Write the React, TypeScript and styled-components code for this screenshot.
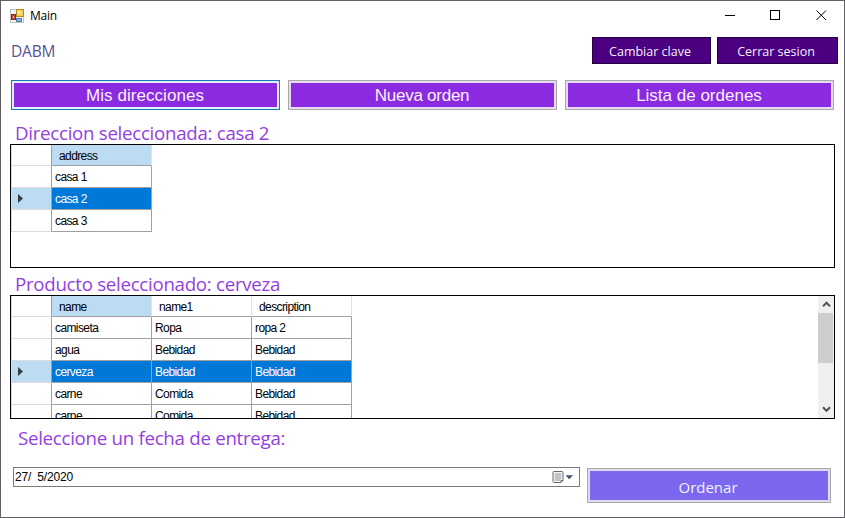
import React from 'react';
import styled, { createGlobalStyle, css } from 'styled-components';

const Global = createGlobalStyle`
  * { box-sizing: border-box; }
  html, body { margin: 0; padding: 0; background: #fff; }
`;

const segoe = `"Open Sans", "Noto Sans", sans-serif`;
const arial = `"Liberation Sans", Arial, sans-serif`;

const Window = styled.div`
  width: 845px;
  height: 518px;
  border: 1px solid #625f66;
  background: #fff;
  overflow: hidden;
  display: flex;
  flex-direction: column;
  font-family: ${segoe};
`;

const TitleBar = styled.header`
  height: 29px;
  flex: none;
  display: flex;
  align-items: center;
  padding-left: 9px;
`;

const Title = styled.span`
  margin-left: 6px;
  flex: 1;
  font-size: 12px;
  line-height: 16px;
  letter-spacing: -0.25px;
  color: #000;
`;

const Caption = styled.div`
  width: 46px;
  display: flex;
  justify-content: center;
`;

const TopRow = styled.div`
  height: 28px;
  flex: none;
  margin: 7px 6px 0 10px;
  display: flex;
  gap: 6px;
`;

const UserName = styled.span`
  flex: 1;
  font-size: 15.5px;
  line-height: 29px;
  letter-spacing: -0.2px;
  color: #5a509a;
`;

const AccountButton = styled.button<{ $w: number }>`
  width: ${p => p.$w}px;
  height: 27px;
  padding: 2px 3px 0 0;
  border: 1px solid #24003f;
  background: #4b0082;
  color: #f6eefb;
  font: 12.5px/23px ${segoe};
`;

const Tabs = styled.nav`
  flex: none;
  height: 30px;
  margin: 15px 10px 0 10px;
  display: grid;
  grid-template-columns: repeat(3, 269px);
  gap: 8px;
`;

const framed = css<{ $focused?: boolean }>`
  border: 1px solid ${p => (p.$focused ? '#1779b8' : '#a9a9a9')};
  margin: 0;
`;

const TabButton = styled.button<{ $focused?: boolean; $ls?: number }>`
  ${framed}
  padding: 2px 1px 0 0;
  background: #8a2be2;
  box-shadow: inset 0 0 0 2px ${p => (p.$focused ? '#e4eefa' : '#ead9f5')};
  color: #fbf0fb;
  font: 17px/24px ${arial};
  letter-spacing: ${p => p.$ls ?? 0}px;
`;

const Heading = styled.h2<{ $left?: number; $top: number; $h: number }>`
  flex: none;
  margin: ${p => p.$top}px 0 0 ${p => p.$left ?? 14}px;
  height: ${p => p.$h}px;
  font-size: 18.7px;
  line-height: 24px;
  font-weight: 400;
  letter-spacing: -0.28px;
  white-space: pre;
  color: #9340e0;
`;

const GridBox = styled.div`
  flex: none;
  width: 825px;
  height: 124px;
  margin-left: 9px;
  border: 1px solid #000;
  display: flex;
  justify-content: space-between;
  overflow: hidden;
`;

const Table = styled.div<{ $cols: number }>`
  display: grid;
  grid-template-columns: 41px repeat(${p => p.$cols}, 100px);
  grid-template-rows: 21px;
  grid-auto-rows: 22px;
  align-content: start;
  font: 12px/20px ${arial};
  letter-spacing: -0.6px;
  color: #000;
`;

const RowHead = styled.div<{ $on?: boolean }>`
  border-right: 1px solid #a0a0a0;
  border-bottom: 1px solid #dcdcdc;
  border-left: 1px solid #dcdcdc;
  background: ${p => (p.$on ? '#bcdcf4' : '#fff')};
  display: flex;
  align-items: center;
  padding-left: 6px;
`;

const ColHead = styled.div<{ $on?: boolean }>`
  border-right: 1px solid #e2e2e2;
  border-bottom: 1px solid #a0a0a0;
  background: ${p => (p.$on ? '#bcdcf4' : '#fff')};
  padding: 1px 0 0 7px;
`;

const Cell = styled.div<{ $on?: boolean }>`
  border-right: 1px solid #a0a0a0;
  border-bottom: 1px solid #a0a0a0;
  background: ${p => (p.$on ? '#0078d7' : '#fff')};
  color: ${p => (p.$on ? '#fff' : '#000')};
  padding: 1px 0 0 3px;
`;

const ScrollBar = styled.div`
  width: 16px;
  display: flex;
  flex-direction: column;
  background: #f0f0f0;
`;

const Arrow = styled.div`
  height: 17px;
  display: flex;
  align-items: center;
  justify-content: center;
`;

const Thumb = styled.div`
  height: 50px;
  margin-right: 1px;
  background: #cdcdcd;
`;

const Spacer = styled.div`
  flex: 1;
`;

const OrderRow = styled.div`
  display: flex;
  align-items: flex-start;
  margin: 17px 0 0 12px;
`;

const DateField = styled.div`
  width: 567px;
  height: 20px;
  border: 1px solid #7a7a7a;
  padding: 0 5px 0 1px;
  display: flex;
  align-items: center;
  justify-content: space-between;
  font: 12px/18px ${arial};
  letter-spacing: -0.2px;
  white-space: pre;
  color: #000;
`;

const OrderButton = styled.button`
  ${framed}
  width: 244px;
  height: 35px;
  margin: 1px 0 0 7px;
  padding: 2px 2px 0 0;
  background: #7b68ee;
  box-shadow: inset 0 0 0 2px #dedcf2;
  color: #f4f2ff;
  font: 400 15px/28px ${segoe};
`;

const AppIcon = () => (
  <svg width="14" height="14" viewBox="0 0 14 14" shapeRendering="crispEdges">
    <rect x=".5" y=".5" width="13" height="13" fill="#f4f6f6" stroke="#b9c6c8" />
    <rect x="6.5" y=".5" width="7" height="7" fill="#f6cf4e" stroke="#b88a1c" />
    <rect x="8" y="2" width="3" height="3" fill="#fde896" />
    <rect x="1.5" y="5.5" width="4" height="5" fill="#c8483c" stroke="#7e2a26" />
    <rect x="3" y="7" width="1" height="2" fill="#f0b0a0" />
    <rect x="6.5" y="9.5" width="5" height="3" fill="#7fb2e8" stroke="#4c7fba" />
  </svg>
);

const Minimize = () => (
  <svg width="11" height="11"><path d="M1 5.5h10" stroke="#000" shapeRendering="crispEdges" /></svg>
);
const Maximize = () => (
  <svg width="11" height="11"><rect x=".5" y=".5" width="9" height="9" fill="none" stroke="#000" shapeRendering="crispEdges" /></svg>
);
const Close = () => (
  <svg width="11" height="11"><path d="M.5.5l9.5 9.5M10 .5L.5 10" stroke="#000" /></svg>
);
const Marker = () => (
  <svg width="6" height="9"><path d="M0 0v9l5-4.5z" fill="#3c3c3c" /></svg>
);
const Chevron = ({ down }: { down?: boolean }) => (
  <svg width="9" height="7"><path d={down ? 'M1 1.2l3.5 3.6L8 1.2' : 'M1 5.4l3.5-3.6L8 5.4'} fill="none" stroke="#505050" strokeWidth="2" /></svg>
);
const Calendar = () => (
  <svg width="22" height="13" viewBox="0 0 22 13">
    <path d="M2 .5h8q1 0 1 1v8l-2 2H2q-1 0-1-1v-9q0-1 1-1z" fill="#f6f6f6" stroke="#6a6a6a" />
    <path d="M2.5 3h7M2.5 5h7M2.5 7h7M2.5 9h5.5M4 2v8M6 2v8M8 2v8" stroke="#a8a8a8" strokeWidth=".8" />
    <path d="M9 11.5v-2h2" fill="none" stroke="#6a6a6a" />
    <path d="M13.5 4.2H21l-3.75 4z" fill="#44546a" />
  </svg>
);

type GridProps = { columns: string[]; rows: string[][]; selected: number };

const DataGrid = ({ columns, rows, selected }: GridProps) => (
  <Table $cols={columns.length}>
    <RowHead />
    {columns.map((c, i) => <ColHead key={c} $on={i === 0}>{c}</ColHead>)}
    {rows.map((row, r) => (
      <React.Fragment key={r}>
        <RowHead $on={r === selected}>{r === selected && <Marker />}</RowHead>
        {row.map((v, i) => <Cell key={i} $on={r === selected}>{v}</Cell>)}
      </React.Fragment>
    ))}
  </Table>
);

const addresses = [['casa 1'], ['casa 2'], ['casa 3']];
const products = [
  ['camiseta', 'Ropa', 'ropa 2'],
  ['agua', 'Bebidad', 'Bebidad'],
  ['cerveza', 'Bebidad', 'Bebidad'],
  ['carne', 'Comida', 'Bebidad'],
  ['carne', 'Comida', 'Bebidad'],
];

export default function App() {
  return (
    <>
      <Global />
      <Window>
        <TitleBar>
          <AppIcon />
          <Title>Main</Title>
          <Caption><Minimize /></Caption>
          <Caption><Maximize /></Caption>
          <Caption><Close /></Caption>
        </TitleBar>
        <TopRow>
          <UserName>DABM</UserName>
          <AccountButton $w={119}>Cambiar clave</AccountButton>
          <AccountButton $w={121}>Cerrar sesion</AccountButton>
        </TopRow>
        <Tabs>
          <TabButton $focused $ls={0.05}>Mis direcciones</TabButton>
          <TabButton $ls={-0.25}>Nueva orden</TabButton>
          <TabButton>Lista de ordenes</TabButton>
        </Tabs>
        <Heading $top={11} $h={23}>Direccion seleccionada: casa 2</Heading>
        <GridBox>
          <DataGrid columns={['address']} rows={addresses} selected={1} />
        </GridBox>
        <Heading $top={4} $h={23}>Producto seleccionado: cerveza</Heading>
        <GridBox>
          <DataGrid columns={['name', 'name1', 'description']} rows={products} selected={2} />
          <ScrollBar>
            <Arrow><Chevron /></Arrow>
            <Thumb />
            <Spacer />
            <Arrow><Chevron down /></Arrow>
          </ScrollBar>
        </GridBox>
        <Heading $left={17} $top={7} $h={24}>Seleccione un fecha de entrega:</Heading>
        <OrderRow>
          <DateField>
            <span>27/  5/2020</span>
            <Calendar />
          </DateField>
          <OrderButton>Ordenar</OrderButton>
        </OrderRow>
      </Window>
    </>
  );
}
